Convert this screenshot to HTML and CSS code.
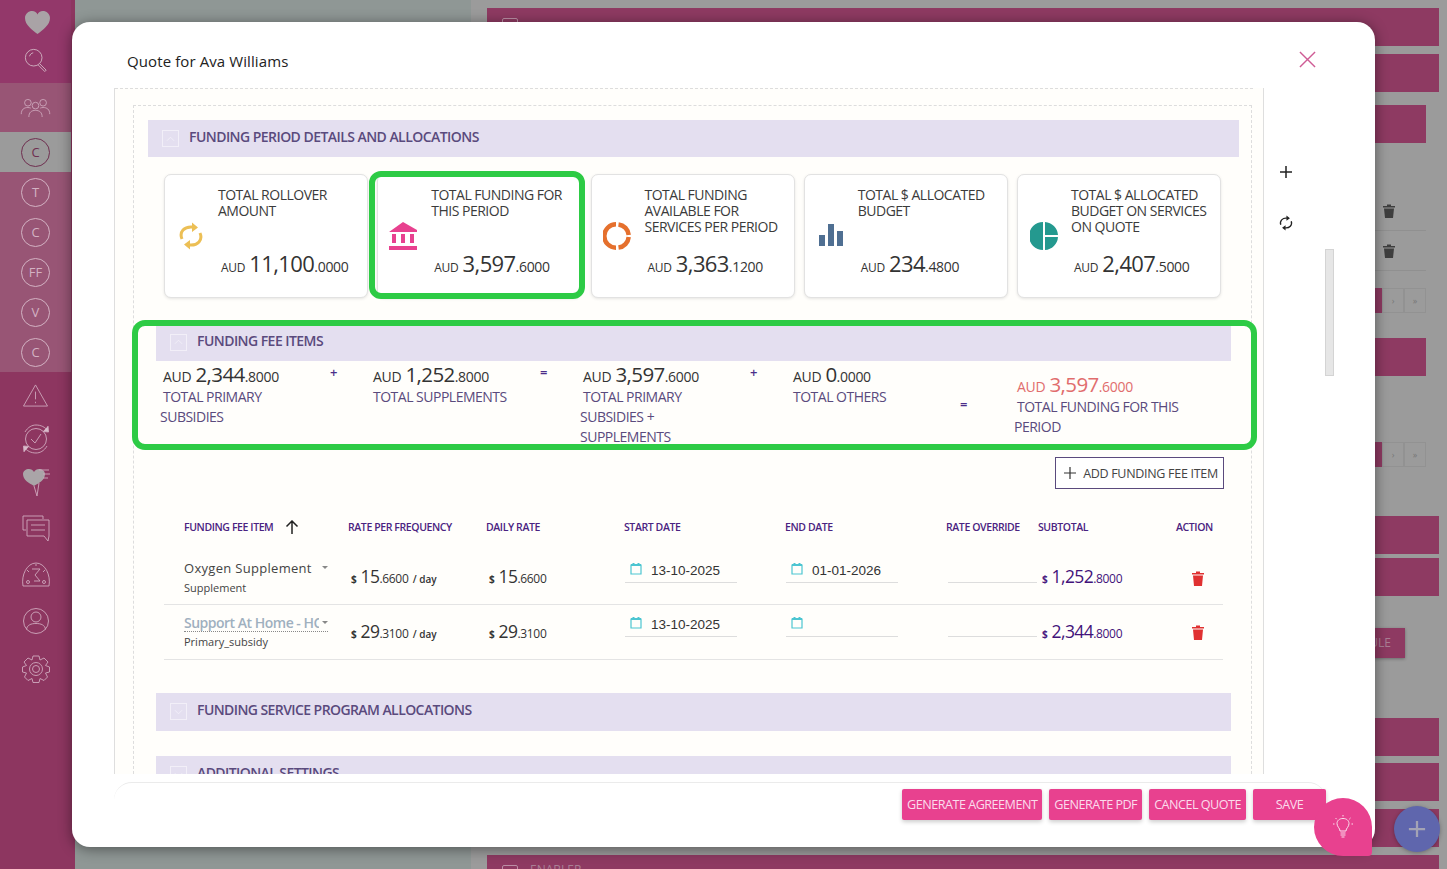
FILE: index.html
```html
<!DOCTYPE html>
<html lang="en">
<head>
<meta charset="utf-8">
<title>Quote for Ava Williams</title>
<link rel="stylesheet" href="styles.css">
</head>
<body>
<div class="app">
  <nav class="sidebar">
    <div class="nav-top">
      <svg class="ic-heart" viewBox="0 0 30 28"><path d="M15 27 C9 22 1 17 1 9 C1 4 5 1 9 1 C12 1 14 2.500 15 5 C16 2.500 18 1 21 1 C25 1 29 4 29 9 C29 17 21 22 15 27Z"/></svg>
      <svg class="ic" viewBox="0 0 26 26"><circle cx="10.500" cy="10.500" r="9"/><path d="M6 9 C6.500 7 8 5.500 10 5.200"/><path d="M17 17 L24 24 L22.500 25.500 L15.500 18.500"/></svg>
    </div>
    <div class="nav-group">
      <svg class="ic-wide" viewBox="0 0 32 20"><circle cx="8" cy="5" r="3.500"/><circle cx="24" cy="5" r="3.500"/><circle cx="16" cy="8" r="3.500"/><path d="M1 17 C1 12 4 10 8 10 C9 10 10 10.200 11 10.600"/><path d="M31 17 C31 12 28 10 24 10 C23 10 22 10.200 21 10.600"/><path d="M9 20 C9 15 12 13 16 13 C20 13 23 15 23 20"/></svg>
    </div>
    <div class="nav-circle active"><span>C</span></div>
    <div class="nav-circle"><span>T</span></div>
    <div class="nav-circle"><span>C</span></div>
    <div class="nav-circle"><span>FF</span></div>
    <div class="nav-circle"><span>V</span></div>
    <div class="nav-circle"><span>C</span></div>
    <div class="nav-low">
      <svg class="ic" viewBox="0 0 26 24"><path d="M13 1 L25.500 23 L0.500 23 Z"/><path d="M13 8 L13 16"/><path d="M13 18.500 L13 20"/></svg>
      <svg class="ic-lg" viewBox="0 0 30 30"><circle cx="15" cy="15" r="10.500"/><path d="M10 15 L14 19 L20 10"/><path d="M4 8 C7 3 11 1 15 1 C20 1 24 3 27 7"/><path d="M27 2 L27.500 8 L22 7.500" class="solid"/><path d="M26 22 C23 27 19 29 15 29 C10 29 6 27 3 23"/><path d="M3 28 L2.500 22 L8 22.500" class="solid"/></svg>
      <svg class="ic-lg" viewBox="0 0 30 30"><path class="fillg" d="M13 19 C8 16 2 13 2 7 C2 4 5 2 8 2 C10 2 12 3 13 5 C14 3 16 2 18 2 C21 2 24 4 24 7 C24 13 18 16 13 19Z"/><path d="M18 3 L28 3 M22 7 L29 7 M22 11 L27 11"/><path d="M13 19 L16 29 L18 16"/></svg>
      <svg class="ic-lg" viewBox="0 0 30 28"><path d="M22 5 L22 2 L2 2 L2 16 L5 16"/><path d="M6 6 L28 6 L28 22 L27 27 L23 22 L6 22 Z"/><path d="M10 11 L24 11 M10 16 L24 16"/></svg>
      <svg class="ic-lg" viewBox="0 0 30 28"><path d="M2 25 C0 14 6 2 15 2 C24 2 30 14 28 25 Z"/><path d="M11 8 L19 8 L14 14 L19 20 L13 20"/><circle cx="7" cy="21" r="1.500"/><circle cx="23" cy="21" r="1.500"/><path d="M15 3 L15 5 M6 9 L8 11 M24 9 L22 11"/></svg>
      <svg class="ic-lg" viewBox="0 0 30 30"><circle cx="15" cy="15" r="12.500"/><circle cx="15" cy="11" r="5"/><path d="M5.500 23.500 C6 19 10 17.500 15 17.500 C20 17.500 24 19 24.500 23.500"/></svg>
      <svg class="ic-lg" viewBox="0 0 30 30"><path d="M12 2 L18 2 L19 6 L23 4 L27 8 L24.500 11.500 L28.500 13 L28.500 18 L24.500 19 L26.500 23 L23 26.500 L19 24.500 L18 28.500 L12 28.500 L11 24.500 L7 26.500 L3.500 23 L5.500 19 L1.500 18 L1.500 13 L5.500 11.500 L3 8 L7 4 L11 6 Z"/><circle cx="15" cy="15" r="6.500"/><circle cx="15" cy="15" r="3.500"/></svg>
    </div>
  </nav>
  <div class="left-panel"></div>
  <main class="right-panel">
    <div class="bg-bar top-bar"><span class="bg-check"></span></div>
    <div class="bg-bar"></div>
    <div class="bg-bar short first"></div>
    <div class="bg-row first-row"><svg class="bg-trash" viewBox="0 0 12 14"><path d="M0 2 L4 2 L4 0.500 L8 0.500 L8 2 L12 2 L12 3.500 L0 3.500 Z M1 4.500 L11 4.500 L10 14 L2 14 Z"/></svg></div>
    <div class="bg-row"><svg class="bg-trash" viewBox="0 0 12 14"><path d="M0 2 L4 2 L4 0.500 L8 0.500 L8 2 L12 2 L12 3.500 L0 3.500 Z M1 4.500 L11 4.500 L10 14 L2 14 Z"/></svg></div>
    <div class="bg-pager first-pager"><span class="pg-on"></span><span>›</span><span>»</span></div>
    <div class="bg-bar short second"></div>
    <div class="bg-pager second-pager"><span class="pg-on"></span><span>›</span><span>»</span></div>
    <div class="bg-bar third"></div>
    <div class="bg-bar fourth"></div>
    <div class="bg-btn">SCHEDULE</div>
    <div class="bg-bar fifth"></div>
    <div class="bg-bar sixth"></div>
    <div class="bg-bar seventh"></div>
    <div class="bg-bottom"><span class="bg-check"></span>ENABLER</div>
  </main>
</div>

<section class="modal">
  <header class="modal-head">
    <h1 class="modal-title">Quote for Ava Williams</h1>
    <svg class="close" viewBox="0 0 18 18"><path d="M1 1 L17 17 M17 1 L1 17"/></svg>
  </header>
  <div class="modal-mid">
    <div class="scroll">
      <div class="dash-box">
        <div class="sec-head"><span class="chk"><svg viewBox="0 0 10 6"><path d="M1 5 L5 1 L9 5"/></svg></span>FUNDING PERIOD DETAILS AND ALLOCATIONS</div>

        <div class="cards">
          <article class="card">
            <svg class="card-ic" viewBox="0 0 24 28"><path class="sync" d="M3 17 C0 10 5 4 14 5 M21 11 C24 18 19 24 10 23"/><path class="sync-f" d="M13 0.500 L19 5.500 L13 10 Z M11 18 L5 22.500 L11 27.500 Z"/></svg>
            <div class="card-body">
              <div class="card-label">TOTAL ROLLOVER AMOUNT</div>
              <div class="amt card-amt"><small>AUD</small> <b>11,100</b><i>.0000</i></div>
            </div>
          </article>
          <article class="card">
            <svg class="card-ic" viewBox="0 0 28 28"><path class="bank" d="M14 0 L28 8 L28 10 L0 10 Z M3 12 L7 12 L7 21 L3 21 Z M12 12 L16 12 L16 21 L12 21 Z M21 12 L25 12 L25 21 L21 21 Z M0 24 L28 24 L28 28 L0 28 Z"/></svg>
            <div class="card-body">
              <div class="card-label">TOTAL FUNDING FOR THIS PERIOD</div>
              <div class="amt card-amt"><small>AUD</small> <b>3,597</b><i>.6000</i></div>
            </div>
            <span class="mark mark-card"></span>
          </article>
          <article class="card">
            <svg class="card-ic" viewBox="0 0 28 28"><path class="ring" d="M13 2.300 A11.700 11.700 0 0 0 13 25.700 M15.500 25.600 A11.700 11.700 0 0 0 25.700 15 M25.700 13 A11.700 11.700 0 0 0 15.500 2.400"/></svg>
            <div class="card-body">
              <div class="card-label">TOTAL FUNDING AVAILABLE FOR SERVICES PER PERIOD</div>
              <div class="amt card-amt"><small>AUD</small> <b>3,363</b><i>.1200</i></div>
            </div>
          </article>
          <article class="card">
            <svg class="card-ic" viewBox="0 0 24 24"><path class="bars" d="M0 12 L6 12 L6 23 L0 23 Z M9 1 L15 1 L15 23 L9 23 Z M18 8 L24 8 L24 23 L18 23 Z"/></svg>
            <div class="card-body">
              <div class="card-label">TOTAL $ ALLOCATED BUDGET</div>
              <div class="amt card-amt"><small>AUD</small> <b>234</b><i>.4800</i></div>
            </div>
          </article>
          <article class="card">
            <svg class="card-ic" viewBox="0 0 28 28"><path class="pie" d="M13 0 L13 28 A14 14 0 0 1 13 0 Z M15 0 A14 14 0 0 1 28 13 L15 13 Z M15 15 L28 15 A14 14 0 0 1 15 28 Z"/></svg>
            <div class="card-body">
              <div class="card-label">TOTAL $ ALLOCATED BUDGET ON SERVICES ON QUOTE</div>
              <div class="amt card-amt"><small>AUD</small> <b>2,407</b><i>.5000</i></div>
            </div>
          </article>
        </div>

        <div class="fee">
          <div class="sec-head inner"><span class="chk"><svg viewBox="0 0 10 6"><path d="M1 5 L5 1 L9 5"/></svg></span>FUNDING FEE ITEMS</div>
          <div class="summary">
            <div class="sum"><div class="amt sum-amt"><small>AUD</small> <b>2,344</b><i>.8000</i></div><div class="sum-label">TOTAL PRIMARY SUBSIDIES</div></div>
            <div class="op">+</div>
            <div class="sum"><div class="amt sum-amt"><small>AUD</small> <b>1,252</b><i>.8000</i></div><div class="sum-label">TOTAL SUPPLEMENTS</div></div>
            <div class="op">=</div>
            <div class="sum"><div class="amt sum-amt"><small>AUD</small> <b>3,597</b><i>.6000</i></div><div class="sum-label">TOTAL PRIMARY SUBSIDIES + SUPPLEMENTS</div></div>
            <div class="op">+</div>
            <div class="sum"><div class="amt sum-amt"><small>AUD</small> <b>0</b><i>.0000</i></div><div class="sum-label">TOTAL OTHERS</div></div>
            <div class="op op-low">=</div>
            <div class="sum sum-total"><div class="amt sum-amt"><small>AUD</small> <b>3,597</b><i>.6000</i></div><div class="sum-label">TOTAL FUNDING FOR THIS PERIOD</div></div>
          </div>
          <span class="mark mark-fee"></span>
        </div>

        <div class="add-line">
          <button class="add-btn" type="button"><svg viewBox="0 0 12 12"><path d="M6 0 L6 12 M0 6 L12 6"/></svg>ADD FUNDING FEE ITEM</button>
        </div>

        <div class="table">
          <div class="tr th">
            <div class="sortable">FUNDING FEE ITEM<svg viewBox="0 0 14 14"><path d="M7 14 L7 1 M1.500 6.500 L7 1 L12.500 6.500"/></svg></div>
            <div>RATE PER FREQUENCY</div><div>DAILY RATE</div><div>START DATE</div><div>END DATE</div><div>RATE OVERRIDE</div><div>SUBTOTAL</div><div>ACTION</div>
          </div>
          <div class="tr td">
            <div class="item"><div class="sel">Oxygen Supplement<span class="caret"></span></div><div class="sub">Supplement</div></div>
            <div class="amt rate"><small>$</small> <b>15</b><i>.6600</i> <em>/ day</em></div>
            <div class="amt rate daily"><small>$</small> <b>15</b><i>.6600</i></div>
            <div class="date"><svg viewBox="0 0 12 13"><path d="M1 3 L11 3 L11 12 L1 12 Z"/><path class="head" d="M1 3 L11 3 M3.500 1 L3.500 3 M8.500 1 L8.500 3"/></svg>13-10-2025</div>
            <div class="date"><svg viewBox="0 0 12 13"><path d="M1 3 L11 3 L11 12 L1 12 Z"/><path class="head" d="M1 3 L11 3 M3.500 1 L3.500 3 M8.500 1 L8.500 3"/></svg>01-01-2026</div>
            <div class="override"></div>
            <div class="amt subtotal"><small>$</small> <b>1,252</b><i>.8000</i></div>
            <div class="act"><svg viewBox="0 0 12 15"><path d="M0 2 L4 2 L4 0.500 L8 0.500 L8 2 L12 2 L12 3.500 L0 3.500 Z M1 4.500 L11 4.500 L10 15 L2 15 Z"/></svg></div>
          </div>
          <div class="tr td">
            <div class="item"><div class="sel linked"><span class="clip">Support At Home - HCP Level</span><span class="caret"></span></div><div class="sub">Primary_subsidy</div></div>
            <div class="amt rate"><small>$</small> <b>29</b><i>.3100</i> <em>/ day</em></div>
            <div class="amt rate daily"><small>$</small> <b>29</b><i>.3100</i></div>
            <div class="date"><svg viewBox="0 0 12 13"><path d="M1 3 L11 3 L11 12 L1 12 Z"/><path class="head" d="M1 3 L11 3 M3.500 1 L3.500 3 M8.500 1 L8.500 3"/></svg>13-10-2025</div>
            <div class="date"><svg viewBox="0 0 12 13"><path d="M1 3 L11 3 L11 12 L1 12 Z"/><path class="head" d="M1 3 L11 3 M3.500 1 L3.500 3 M8.500 1 L8.500 3"/></svg></div>
            <div class="override"></div>
            <div class="amt subtotal"><small>$</small> <b>2,344</b><i>.8000</i></div>
            <div class="act"><svg viewBox="0 0 12 15"><path d="M0 2 L4 2 L4 0.500 L8 0.500 L8 2 L12 2 L12 3.500 L0 3.500 Z M1 4.500 L11 4.500 L10 15 L2 15 Z"/></svg></div>
          </div>
        </div>

        <div class="sec-head inner closed"><span class="chk"><svg viewBox="0 0 10 6"><path d="M1 1 L5 5 L9 1"/></svg></span>FUNDING SERVICE PROGRAM ALLOCATIONS</div>
        <div class="sec-head inner closed next"><span class="chk"><svg viewBox="0 0 10 6"><path d="M1 1 L5 5 L9 1"/></svg></span>ADDITIONAL SETTINGS</div>
      </div>
    </div>
    <aside class="side">
      <div class="tools">
        <svg class="tool" viewBox="0 0 14 14"><path d="M7 1 L7 13 M1 7 L13 7"/></svg>
        <svg class="tool" viewBox="0 0 16 18"><path d="M2 11 C0.500 6.500 4 3 9 3.500 M14 7 C15.500 11.500 12 15 7 14.500"/><path class="tool-f" d="M8.500 0.500 L12.500 3.500 L8.500 6.500 Z M7.500 11.500 L3.500 14.500 L7.500 17.500 Z"/></svg>
      </div>
      <div class="scrollbar"></div>
    </aside>
  </div>
  <footer class="modal-foot">
    <button class="btn" type="button">GENERATE AGREEMENT</button>
    <button class="btn" type="button">GENERATE PDF</button>
    <button class="btn" type="button">CANCEL QUOTE</button>
    <button class="btn save" type="button">SAVE</button>
  </footer>
  <button class="bulb" type="button" aria-label="Tips"><svg viewBox="0 0 20 24"><path d="M7 16 C7 13 4 12 4 8.500 C4 5.500 6.500 3.500 10 3.500 C13.500 3.500 16 5.500 16 8.500 C16 12 13 13 13 16 Z"/><path d="M7.500 18 L12.500 18 M7.500 20 L12.500 20 M8.500 22 L11.500 22"/><path d="M10 0 L10 1.500 M2.500 3 L3.700 4.200 M17.500 3 L16.300 4.200 M0 9 L1.500 9 M18.500 9 L20 9"/></svg></button>
</section>
<button class="fab" type="button" aria-label="Add"><svg viewBox="0 0 20 20"><path d="M10 1 L10 19 M1 10 L19 10"/></svg></button>
</body>
</html>
```
FILE: styles.css
```css
* { box-sizing: border-box; }
html, body { margin: 0; height: 869px; overflow: hidden; }
body { font-family: "Open Sans", "Liberation Sans", sans-serif; background: #9b9b9b; color: #333; }
button { font-family: inherit; }

/* page behind the dialog */
.app { display: flex; height: 869px; overflow: hidden; }
.sidebar { width: 75px; flex: none; background: #8d3660; display: flex; flex-direction: column; padding-right: 4px; box-shadow: 2px 0 5px rgba(0,0,0,.25); }
.sidebar svg { fill: none; stroke: #cfa9bd; stroke-width: .9; display: block; }
.nav-top { height: 83px; background: #93386a; display: flex; flex-direction: column; align-items: center; padding-top: 10px; gap: 13px; }
.ic-heart { width: 27px; height: 25px; fill: #a9a3a6 !important; stroke: none !important; margin-left: 4px; }
.nav-top .ic { margin-left: 0; width: 24px; height: 24px; stroke: #d6bfca; }
.ic { width: 25px; height: 25px; }
.ic-wide { width: 31px; height: 19px; }
.ic-lg { width: 30px; height: 30px; }
.nav-group { height: 49px; background: #985575; display: flex; align-items: center; justify-content: center; }
.nav-circle { height: 40px; background: #985575; display: flex; align-items: center; justify-content: center; }
.nav-circle span { width: 29px; height: 29px; border: 1px solid #d3b2c3; border-radius: 50%; color: #d3b2c3; font-size: 13px; display: flex; align-items: center; justify-content: center; }
.nav-circle.active { background: #9b9b9b; }
.nav-circle.active span { border-color: #6f2f50; color: #6f2f50; }
.nav-low { display: grid; grid-template-rows: 46px 42px 44px 48px 46px 46px 50px; justify-items: center; align-items: center; }
.fillg { fill: #aaa5a8; stroke: none; }
.solid { fill: #d9bccb; }

.left-panel { width: 396px; flex: none; background: #8f9795; }
.right-panel { width: 952px; height: 869px; margin-left: 16px; flex: none; display: flex; flex-direction: column; padding-top: 8px; overflow: hidden; }
.right-panel > * { flex: none; }
.bg-bar { height: 38px; background: #8e3a62; margin-bottom: 8px; }
.top-bar { padding: 10px 0 0 15px; }
.bg-bar.short { width: 939px; }
.bg-bar.first { margin-top: 5px; margin-bottom: 0; }
.bg-row { width: 939px; height: 40px; border-bottom: 1px solid #909090; display: flex; align-items: center; justify-content: flex-end; padding-right: 31px; }
.first-row { margin-top: 48px; }
.bg-trash { width: 12px; height: 14px; fill: #3e3e3e; }
.bg-pager { width: 939px; height: 25px; display: flex; justify-content: flex-end; }
.first-pager { margin-top: 17px; }
.second-pager { margin-top: 66px; }
.bg-pager span { width: 22px; border: 1px solid #929292; font-size: 9px; color: #777; display: flex; align-items: center; justify-content: center; }
.pg-on { background: #8e3a62; border-color: #8e3a62 !important; }
.bg-bar.second { margin-top: 25px; margin-bottom: 0; }
.bg-bar.third { margin-top: 49px; margin-bottom: 4px; }
.bg-bar.fourth { margin-bottom: 0; }
.bg-btn { align-self: flex-end; margin: 32px 34px 0 0; width: 100px; height: 30px; padding-left: 12px; background: #8e3a62; color: #a97f94; font-size: 12px; line-height: 30px; text-align: center; box-shadow: 0 1px 3px rgba(0,0,0,.3); }
.bg-bar.fifth { margin-top: 60px; margin-bottom: 7px; }
.bg-bottom { height: 14px; background: #8e3a62; padding-left: 15px; color: #a98095; font-size: 12px; line-height: 30px; overflow: hidden; }
.bg-check { display: inline-block; width: 16px; height: 16px; border: 1px solid #bb8fa5; border-radius: 2px; vertical-align: top; }
.bg-bottom .bg-check { margin: 10px 12px 0 0; }

/* dialog */
.modal { position: absolute; left: 72px; top: 22px; width: 1303px; height: 825px; background: #fff; border-radius: 18px; box-shadow: 0 2px 14px rgba(0,0,0,.45); display: flex; flex-direction: column; }
.modal-head { height: 66px; flex: none; display: flex; align-items: flex-start; justify-content: space-between; padding: 29px 59px 0 55px; }
.modal-title { margin: 0; font-size: 15px; font-weight: 400; line-height: 20px; letter-spacing: .1px; color: #222; }
.close { width: 17px; height: 17px; fill: none; stroke: #cf5c95; stroke-width: 1.500; }
.modal-mid { height: 686px; flex: none; display: flex; padding-left: 42px; }
.scroll { width: 1150px; flex: none; height: 686px; overflow: hidden; background: #fffefb; border-left: 1px solid #dedede; border-right: 1px solid #dedede; padding: 17px 11px 0 18px; position: relative; }
.scroll::before { content: ""; display: block; position: absolute; left: 0; right: 10px; top: 0; border-top: 1px dashed #ddd; }
.dash-box { border: 1px dashed #ddd; border-bottom: 0; padding: 14px 12px 0 14px; }

.sec-head { height: 37px; background: #e4dff0; display: flex; align-items: center; padding: 0 0 4px 14px; font-size: 14px; font-weight: 600; letter-spacing: -.55px; color: #5a4a7d; }
.sec-head .chk { width: 17px; height: 17px; border: 1px solid #f2eff8; margin: 4px 10px 0 0; display: flex; align-items: center; justify-content: center; flex: none; }
.chk svg { width: 9px; height: 6px; fill: none; stroke: #f2eff8; stroke-width: 1; }
.sec-head.inner { margin: 0 8px; height: 38px; }
.sec-head.closed { margin-top: 33px; padding-bottom: 5px; letter-spacing: -.58px; }
.sec-head.next { margin-top: 25px; }

.cards { display: flex; gap: 9.250px; margin: 17px 17px 0 16px; }
.card { width: 204px; height: 124px; flex: none; background: #fff; border: 1px solid #e2e2e2; border-radius: 7px; box-shadow: 0 1px 3px rgba(0,0,0,.1); display: flex; align-items: center; padding-left: 14px; position: relative; }
.card-ic { width: 24px; height: 28px; flex: none; }
.card:nth-child(2) .card-ic, .card:nth-child(3) .card-ic { width: 28px; margin-left: -3px; margin-right: -1px; }
.card:nth-child(5) .card-ic { width: 28px; margin-left: -2px; margin-right: -2px; }
.card:nth-child(4) .card-ic { margin-top: -2px; }
.card-body { margin-left: 15px; align-self: stretch; display: flex; flex-direction: column; padding-top: 12px; position: relative; flex: 1; }
.card-label { font-size: 14px; line-height: 16px; letter-spacing: -.5px; color: #3b3b3b; font-weight: 500; height: 48px; width: 146px; }
.sync { fill: none; stroke: #ecbf55; stroke-width: 3; }
.sync-f { fill: #ecbf55; }
.bank { fill: #e8418f; }
.ring { fill: none; stroke: #e5702d; stroke-width: 4.500; }
.bars { fill: #4f6f92; }
.pie { fill: #24998f; }

.amt { white-space: nowrap; color: #333; }
.amt b { font-weight: 500; letter-spacing: -.6px; }
.amt i { font-style: normal; letter-spacing: -.3px; }
.amt small { letter-spacing: -.3px; }
.card-amt { margin-top: 14px; margin-left: 3px; line-height: 28px; }
.card-amt small { font-size: 12px; }
.card-amt b { font-size: 22px; }
.card-amt i { font-size: 14px; }

.fee { margin-top: 25px; position: relative; }
.mark { position: absolute; border: 6px solid #2dcb45; pointer-events: none; }
.mark-card { left: -9px; right: -5px; top: -4px; bottom: -2px; border-radius: 12px; }
.mark-fee { left: -16px; right: -18px; top: -3px; height: 130px; border-radius: 13px; }

.summary { display: flex; height: 88px; margin: 0 8px; padding-left: 4px; color: #5a4a7d; }
.sum { width: 170px; flex: none; }
.sum-amt { line-height: 26px; text-indent: 3px; }
.sum-amt small { font-size: 14px; }
.sum-amt b { font-size: 20.500px; }
.sum-amt i { font-size: 14px; }
.sum-label { font-size: 14px; line-height: 20px; letter-spacing: -.5px; color: #5a4a7d; text-indent: 3px; margin-top: -3px; font-weight: 500; width: 158px; }
.op { width: 40px; flex: none; font-size: 13px; font-weight: 600; padding: 2px 0 0 0; color: #4b2d8a; }
.op-low { width: 54px; padding-top: 34px; text-indent: 0; }
.sum-total { padding-top: 10px; width: 180px; }
.sum-total .sum-label { width: 176px; }
.sum-total .amt, .sum-total small, .sum-total b, .sum-total i { color: #e16d6d; }

.add-line { display: flex; justify-content: flex-end; margin: 8px 15px 0 0; }
.add-btn { width: 169px; height: 32px; background: #fff; border: 1px solid #5a4a7d; color: #444; font-size: 12.500px; letter-spacing: -.3px; display: flex; align-items: center; justify-content: center; gap: 7px; padding: 0 0 0 3px; }
.add-btn svg { width: 12px; height: 12px; fill: none; stroke: #333; stroke-width: 1.200; }

.table { margin: 27px 16px 0 16px; }
.tr { display: grid; grid-template-columns: 184px 138px 138px 161px 161px 92px 138px 46px; }
.th { height: 22px; font-size: 10.500px; letter-spacing: -.4px; font-weight: 600; color: #4a2381; align-items: center; }
.th > div:first-child { padding-left: 20px; }
.sortable { display: flex; align-items: center; gap: 12px; }
.sortable svg { width: 14px; height: 14px; fill: none; stroke: #222; stroke-width: 1.500; }
.td { height: 55px; border-bottom: 1px solid #e4e4e4; align-items: center; }
.th + .td { margin-top: 12px; }
.item { padding-left: 20px; }
.sel { font-size: 13px; color: #444; letter-spacing: .3px; line-height: 20px; display: flex; align-items: center; width: 144px; justify-content: space-between; }
.sel.linked { color: #9fb0bf; font-weight: 600; letter-spacing: -.5px; font-size: 14px; border-bottom: 1px dotted #888; line-height: 17px; }
.clip { width: 135px; overflow: hidden; white-space: nowrap; }
.caret { width: 0; height: 0; border: 3px solid transparent; border-top-color: #888; margin-top: 3px; }
.sub { font-size: 11px; color: #444; line-height: 18px; margin-top: 1px; }
.rate { padding-left: 3px; margin-top: -2px; color: #333; }
.rate small { font-size: 10px; font-weight: 700; }
.rate b { font-size: 17.500px; }
.rate i { font-size: 12px; }
.rate em { font-style: normal; font-size: 10px; font-weight: 600; }
.date { height: 25px; margin: -14px 48px 0 1px; border-bottom: 1px solid #ddd; display: flex; align-items: center; gap: 9px; padding: 2px 0 0 5px; font-family: "Liberation Sans", sans-serif; font-size: 13.500px; color: #333; }
.td + .td .date, .td + .td .override { margin-top: -16px; }
.date svg { width: 12px; height: 13px; fill: none; stroke: #4cc5d1; stroke-width: 1.200; margin-top: -5px; }
.date svg .head { stroke-width: 2; }
.override { height: 25px; margin: -14px 1px 0 2px; border-bottom: 1px solid #ddd; }
.subtotal { padding-left: 4px; margin-top: -2px; color: #4a1a80; }
.subtotal small { font-size: 10px; font-weight: 700; }
.subtotal b { font-size: 17.500px; color: #42127a; }
.subtotal i { font-size: 12px; color: #42127a; }
.act svg { width: 12px; height: 15px; fill: #e03131; display: block; margin: 2px 0 0 16px; }
.td + .td .act svg { margin-top: 0; }

.side { flex: 1; display: flex; padding-left: 15px; }
.tools { width: 14px; height: 80px; margin-top: 77px; display: flex; flex-direction: column; align-items: center; gap: 35px; }
.tool { width: 14px; height: 14px; fill: none; stroke: #222; stroke-width: 1.500; display: block; }
.tool:last-child { height: 18px; }
.tool-f { fill: #222; stroke: none; }
.scrollbar { width: 9px; height: 127px; margin: 161px 0 0 32px; background: #e6e6e6; border: 1px solid #d4d4d4; }

.modal-foot { margin: 8px 49px 0 42px; height: 65px; border-top: 1px solid #ebebeb; border-radius: 18px 18px 0 0; display: flex; justify-content: flex-end; align-items: flex-start; gap: 7px; padding-top: 6px; }
.btn { height: 31px; padding: 0 5px; border: 0; border-radius: 2px; background: #e8418f; color: #fbdcec; font-size: 12.600px; font-weight: 500; letter-spacing: -.5px; line-height: 29px; box-shadow: 0 2px 4px rgba(0,0,0,.2); }
.save { width: 73px; }
.bulb { position: absolute; right: 3px; bottom: -9px; width: 58px; height: 58px; border: 0; border-radius: 50% 50% 4px 50%; background: #e8418f; padding: 0; display: flex; align-items: center; justify-content: center; }
.bulb svg { width: 20px; height: 24px; fill: none; stroke: #fbe0ee; stroke-width: 1; }
.fab { position: absolute; left: 1394px; top: 806px; width: 46px; height: 46px; border: 0; border-radius: 50%; background: #5f66ad; padding: 0; display: flex; align-items: center; justify-content: center; box-shadow: 0 1px 4px rgba(0,0,0,.3); }
.fab svg { width: 18px; height: 18px; fill: none; stroke: #a3a3b5; stroke-width: 2.500; }
```
